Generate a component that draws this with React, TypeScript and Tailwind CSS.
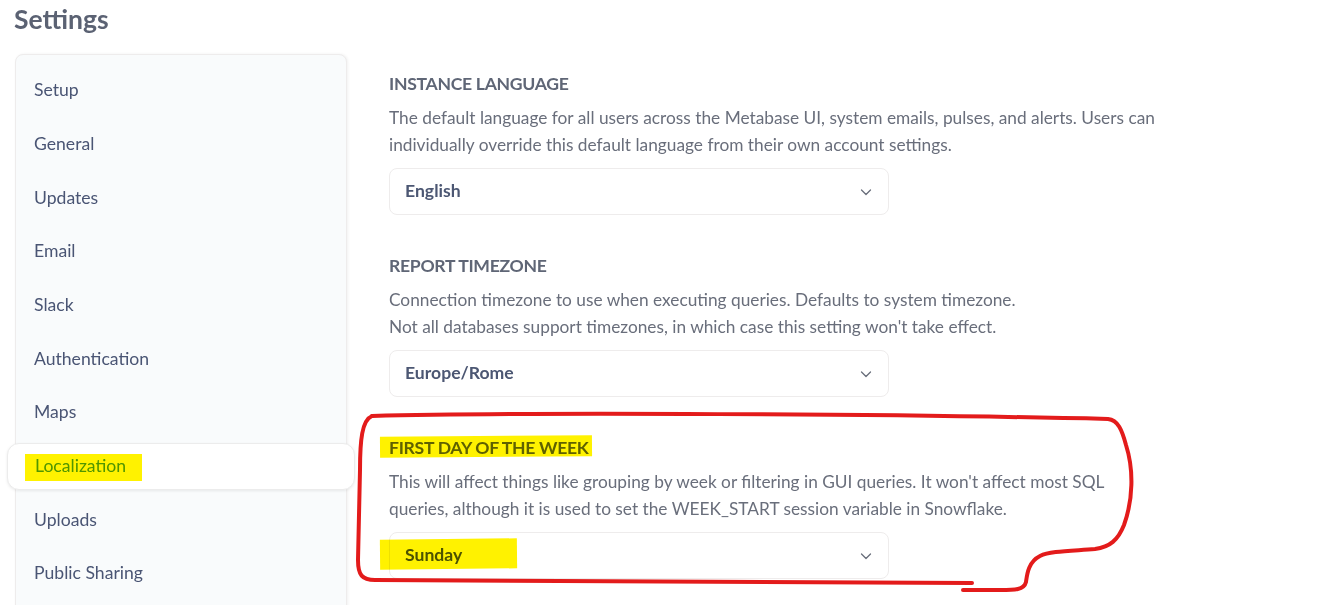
const navItems = [
  "Setup",
  "General",
  "Updates",
  "Email",
  "Slack",
  "Authentication",
  "Maps",
  "Localization",
  "Uploads",
  "Public Sharing",
];

const sections = [
  {
    title: "Instance Language",
    lines: [
      "The default language for all users across the Metabase UI, system emails, pulses, and alerts. Users can",
      "individually override this default language from their own account settings.",
    ],
    value: "English",
  },
  {
    title: "Report Timezone",
    lines: [
      "Connection timezone to use when executing queries. Defaults to system timezone.",
      "Not all databases support timezones, in which case this setting won't take effect.",
    ],
    value: "Europe/Rome",
  },
  {
    title: "First day of the week",
    lines: [
      "This will affect things like grouping by week or filtering in GUI queries. It won't affect most SQL",
      "queries, although it is used to set the WEEK_START session variable in Snowflake.",
    ],
    value: "Sunday",
    marked: true,
  },
];

function Chevron() {
  return (
    <svg width="14" height="14" viewBox="0 0 14 14" fill="none" className="text-[#696e7b]">
      <path d="M2.5 5l4.5 4.5L11.5 5" stroke="currentColor" strokeWidth="1.3" strokeLinecap="round" strokeLinejoin="round" />
    </svg>
  );
}

function Select({ value, marked }: { value: string; marked?: boolean }) {
  return (
    <div className="flex h-[47px] w-[500px] items-center justify-between rounded-lg border border-[#eeecec] bg-white pl-[15px] pr-[15px]">
      <span className="relative text-[17.6px] font-bold text-[#4c5773]">
        {value}
        {marked && (
          <span className="absolute -left-[25px] -right-[55px] -top-[3px] bottom-[-1px] -rotate-[0.6deg] bg-[#fff200] mix-blend-multiply" />
        )}
      </span>
      <Chevron />
    </div>
  );
}

export default function App() {
  return (
    <div
      className="relative h-[605px] w-full overflow-hidden bg-white text-[#4c5773]"
      style={{ fontFamily: "Lato, 'Open Sans', sans-serif" }}
    >
      <h1 className="pl-[14px] pt-[3px] text-[26.5px] leading-8 font-bold text-[#5b6273]">Settings</h1>

      <div className="mt-[19px] flex gap-[42px] pl-[15px]">
        <aside className="h-[700px] w-[332px] shrink-0 rounded-lg border border-[#eeecec] bg-[#f9fbfc] pt-[12px] shadow-[1px_0_3px_rgba(0,0,0,0.06)]">
          <nav className="flex flex-col gap-[6.7px]">
            {navItems.map((item) =>
              item === "Localization" ? (
                <div
                  key={item}
                  className="-mx-[9px] flex h-[47px] items-center rounded-xl border border-[#ececec] bg-white px-[27px] shadow-[0_1px_3px_rgba(0,0,0,0.08)]"
                >
                  <span className="relative text-[17.6px] text-[#509ee3]">
                    {item}
                    <span className="absolute -left-[10px] -right-[16px] top-[1px] bottom-[-1px] bg-[#fff200] mix-blend-multiply" />
                  </span>
                </div>
              ) : (
                <div key={item} className="flex h-[47px] items-center px-[18px] text-[17.6px] text-[#4a5574]">
                  {item}
                </div>
              )
            )}
          </nav>
        </aside>

        <main className="flex flex-col gap-[39px] pt-[18px]">
          {sections.map((s) => (
            <section key={s.title}>
              <h2 className="text-[17.6px] leading-6 font-bold uppercase tracking-[-0.3px] text-[#5f6676]">
                <span className="relative">
                  {s.title}
                  {s.marked && (
                    <span className="absolute -left-[9px] -right-[3px] -top-[1px] bottom-[1px] -rotate-[0.4deg] bg-[#fff200] mix-blend-multiply" />
                  )}
                </span>
              </h2>
              <p className="mt-2 text-[17.3px] leading-[27px] text-[#696e7b]">
                {s.lines[0]}
                <br />
                {s.lines[1]}
              </p>
              <div className="mt-[10px]">
                <Select value={s.value} marked={s.marked} />
              </div>
            </section>
          ))}
        </main>
      </div>

      <svg
        className="pointer-events-none absolute left-0 top-0"
        width="1332"
        height="605"
        viewBox="0 0 1332 605"
        fill="none"
      >
        <path
          d="M372 416 C520 412 900 414 1108 419 C1118 420 1122 430 1126 445 C1134 470 1133 500 1124 525 C1118 540 1110 547 1095 549 C1070 551 1050 551 1040 556 C1028 562 1027 575 1026 582 C1024 590 1015 590 1000 590 L963 590"
          stroke="#e31b1b"
          strokeWidth="4"
          strokeLinecap="round"
          strokeLinejoin="round"
        />
        <path
          d="M372 416 C362 420 360 440 360 470 L358 560 C358 575 362 580 375 580 C600 580 800 582 972 583"
          stroke="#e31b1b"
          strokeWidth="4"
          strokeLinecap="round"
          strokeLinejoin="round"
        />
      </svg>
    </div>
  );
}
